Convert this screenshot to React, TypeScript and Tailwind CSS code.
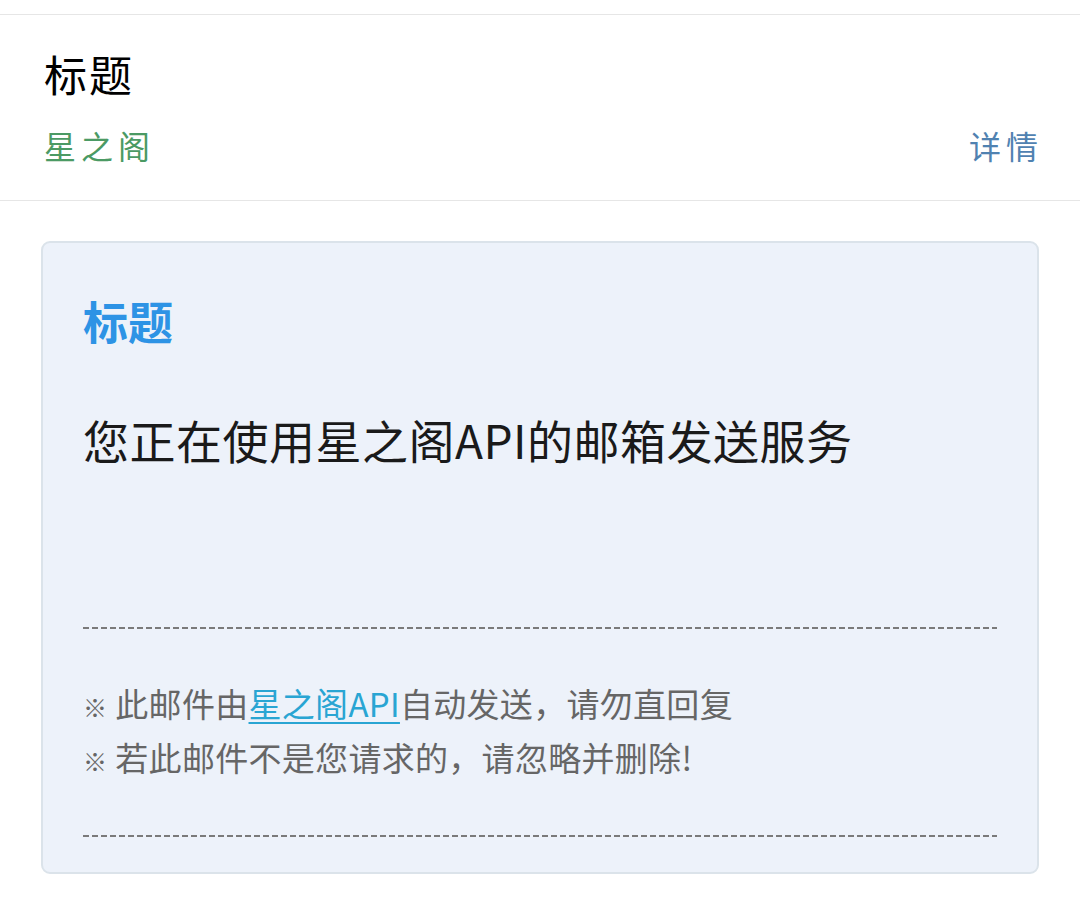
export default function App() {
  const cjk = "font-['Noto_Sans_CJK_SC','Noto_Sans',sans-serif]"

  return (
    <div className={`min-h-[914px] bg-white ${cjk}`}>
      {/* Header */}
      <div className="mt-[14px] border-y border-[#e6e6e6] pl-[44px] pr-[37px] pt-[30px] pb-[33px]">
        <h1 className="text-[43px] leading-[56px] tracking-[2px] text-black">标题</h1>
        <div className="mt-[22px] flex items-center justify-between text-[32px] leading-[44px] tracking-[5px]">
          <span className="text-[#4b9a64]">星之阁</span>
          <span className="text-[#5082b1]">详情</span>
        </div>
      </div>

      {/* Mail card */}
      <div className="px-[41px] pt-[40px]">
        <div className="rounded-[9px] border-2 border-[#dbe3ea] bg-[#edf2fa] px-[40px] pt-[46px] pb-[35px]">
          <h2 className="text-[45px] leading-[64px] font-bold text-[#2d93e5]">标题</h2>
          <p className="mt-[54px] text-[46px] leading-[64px] tracking-[0.5px] text-[#1a1a1a]">
            您正在使用星之阁API的邮箱发送服务
          </p>

          <div className="mt-[156px] h-[2px] bg-[repeating-linear-gradient(to_right,#7a7a7a_0_6px,transparent_6px_9px)]" />

          <div className="pt-[49px] pb-[49px] text-[33px] leading-[50px] tracking-[0.3px] text-[#666666]">
            <p>
              <span className="text-[24px] mr-[8px]">※</span>此邮件由
              <a className="text-[#29a5d3] underline underline-offset-[5px] decoration-2">星之阁API</a>
              自动发送，请勿直回复
            </p>
            <p>
              <span className="text-[24px] mr-[8px]">※</span>若此邮件不是您请求的，请忽略并删除!
            </p>
          </div>

          <div className="h-[2px] bg-[repeating-linear-gradient(to_right,#7a7a7a_0_6px,transparent_6px_9px)]" />
        </div>
      </div>
    </div>
  )
}
